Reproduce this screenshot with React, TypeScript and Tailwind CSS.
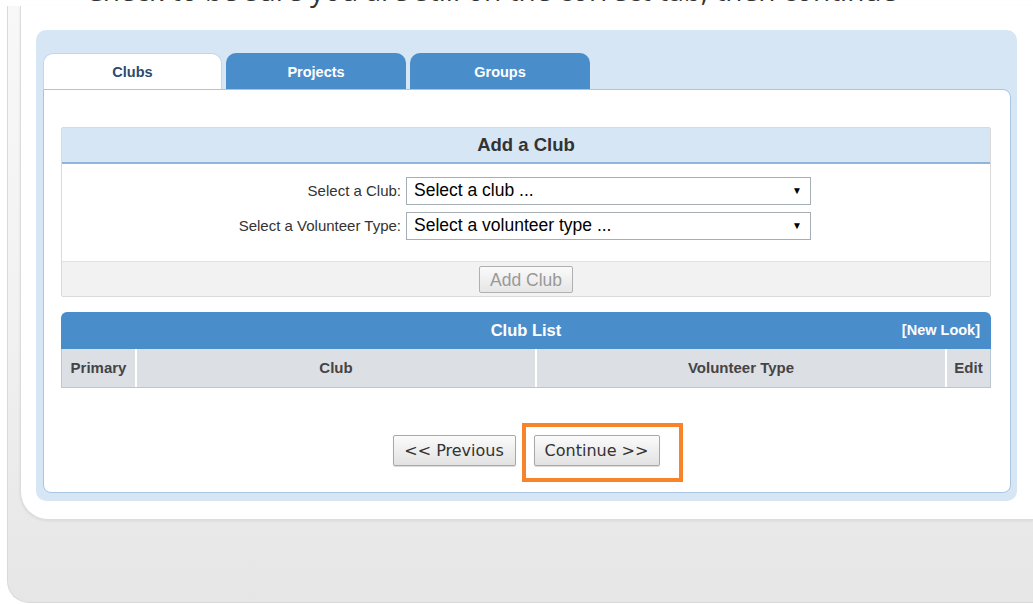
import React from 'react';

const tabs = [
  { label: 'Clubs', active: true, width: 'w-[179px]' },
  { label: 'Projects', active: false, width: 'w-[180px]' },
  { label: 'Groups', active: false, width: 'w-[180px]' },
];

const columns = [
  { label: 'Primary', width: 'w-[73px]' },
  { label: 'Club', width: 'w-[400px]' },
  { label: 'Volunteer Type', width: 'flex-1' },
  { label: 'Edit', width: 'w-[45px]' },
];

const SelectBox: React.FC<{ placeholder: string }> = ({ placeholder }) => (
  <div className="ml-[5px] w-[405px] h-[28px] border border-[#a5adb5] bg-white flex items-center justify-between pl-[7px] pr-[8px]">
    <span className="text-[17.5px] text-black leading-none">{placeholder}</span>
    <span className="text-[10px] text-black leading-none">▼</span>
  </div>
);

const NavButton: React.FC<{ label: string; width: string }> = ({ label, width }) => (
  <button
    className={`${width} h-[31px] border border-[#a8a8a8] rounded-[2px] bg-gradient-to-b from-[#fbfbfb] to-[#e2e2e2] text-[16px] text-[#333] shadow-[0_1px_1px_rgba(0,0,0,0.15)]`}
    style={{ fontFamily: '"DejaVu Sans", Verdana, sans-serif' }}
  >
    {label}
  </button>
);

const App: React.FC = () => {
  return (
    <div
      className="relative w-[1033px] h-[604px] bg-white overflow-hidden"
      style={{ fontFamily: '"Liberation Sans", Arial, sans-serif' }}
    >
      {/* caption line running off the top edge */}
      <div
        className="absolute left-[85px] top-[-28px] text-[28px] text-[#333] whitespace-nowrap z-10 leading-[36px]"
        style={{ fontFamily: '"Open Sans", sans-serif' }}
      >
        Check to be sure you are still on the correct tab, then continue
      </div>

      {/* outer shell */}
      <div className="ml-[7px] mt-[6px] h-[597px] rounded-bl-[22px] border-l border-b border-[#d9d9d9] bg-gradient-to-b from-[#f8f8f8] via-[#f2f2f2] to-[#e6e6e6] flex flex-col">
        {/* white card */}
        <div className="ml-[12px] bg-white rounded-bl-[28px] border-l border-b border-[#dcdcdc] shadow-[0_1px_3px_rgba(0,0,0,0.08)] pl-[15px] pt-[24px] pb-[18px] pr-[16px]">
          {/* tab frame */}
          <div className="w-[981px] bg-[#d6e6f5] rounded-[10px] pl-[7px] pr-[6px] pt-[23px] pb-[8px]">
            <div className="flex gap-[4px] h-[36px]">
              {tabs.map(t => (
                <div
                  key={t.label}
                  className={`${t.width} pt-[3px] rounded-t-[10px] flex items-center justify-center text-[14.5px] font-bold ${
                    t.active
                      ? 'bg-white text-[#2d4a70] border border-b-0 border-[#c2d6ea]'
                      : 'bg-[#4a8dcb] text-white'
                  }`}
                >
                  {t.label}
                </div>
              ))}
            </div>

            {/* tab content */}
            <div className="bg-white border border-[#a9c5e2] rounded-b-[8px] rounded-tr-[8px] h-[404px] pl-[17px] pr-[19px] pt-[37px]">
              {/* Add a Club */}
              <div className="border border-[#dadada] rounded-[2px]">
                <div className="h-[36px] bg-[#d6e6f5] border-b-2 border-[#8fb5da] flex items-center justify-center text-[18.5px] font-bold text-[#333]">
                  Add a Club
                </div>
                <div className="pt-[13px] pb-[21px] flex flex-col gap-[7px]">
                  <div className="flex items-center">
                    <div className="w-[339px] text-right text-[15px] text-[#333]">Select a Club:</div>
                    <SelectBox placeholder="Select a club ..." />
                  </div>
                  <div className="flex items-center">
                    <div className="w-[339px] text-right text-[15px] text-[#333]">Select a Volunteer Type:</div>
                    <SelectBox placeholder="Select a volunteer type ..." />
                  </div>
                </div>
                <div className="h-[35px] bg-[#f2f2f2] border-t border-[#e2e2e2] flex items-center justify-center">
                  <button className="w-[94px] h-[27px] border border-[#b0b0b0] rounded-[2px] bg-gradient-to-b from-[#fafafa] to-[#e6e6e6] text-[17.5px] text-[#999]">
                    Add Club
                  </button>
                </div>
              </div>

              {/* Club List */}
              <div className="mt-[15px]">
                <div className="relative h-[37px] bg-[#4a8dcb] rounded-t-[6px] flex items-center justify-center text-white font-bold">
                  <span className="text-[16.5px]">Club List</span>
                  <span className="absolute right-[11px] text-[14.5px]">[New Look]</span>
                </div>
                <div className="flex h-[39px] bg-[#dcdfe4] border border-t-0 border-[#b9c6d3]">
                  {columns.map((c, i) => (
                    <div
                      key={c.label}
                      className={`${c.width} flex items-center justify-center text-[15px] font-bold text-[#444] ${
                        i > 0 ? 'border-l-2 border-white' : ''
                      }`}
                    >
                      {c.label}
                    </div>
                  ))}
                </div>
              </div>

              {/* step navigation */}
              <div className="mt-[47px] flex justify-center gap-[18px]">
                <NavButton label="<< Previous" width="w-[123px]" />
                <div className="relative">
                  <NavButton label="Continue >>" width="w-[126px]" />
                  <div className="absolute left-[-12px] top-[-12px] right-[-23px] bottom-[-16px] border-4 border-[#f7832a] pointer-events-none" />
                </div>
              </div>
            </div>
          </div>
        </div>
      </div>
    </div>
  );
};

export default App;
